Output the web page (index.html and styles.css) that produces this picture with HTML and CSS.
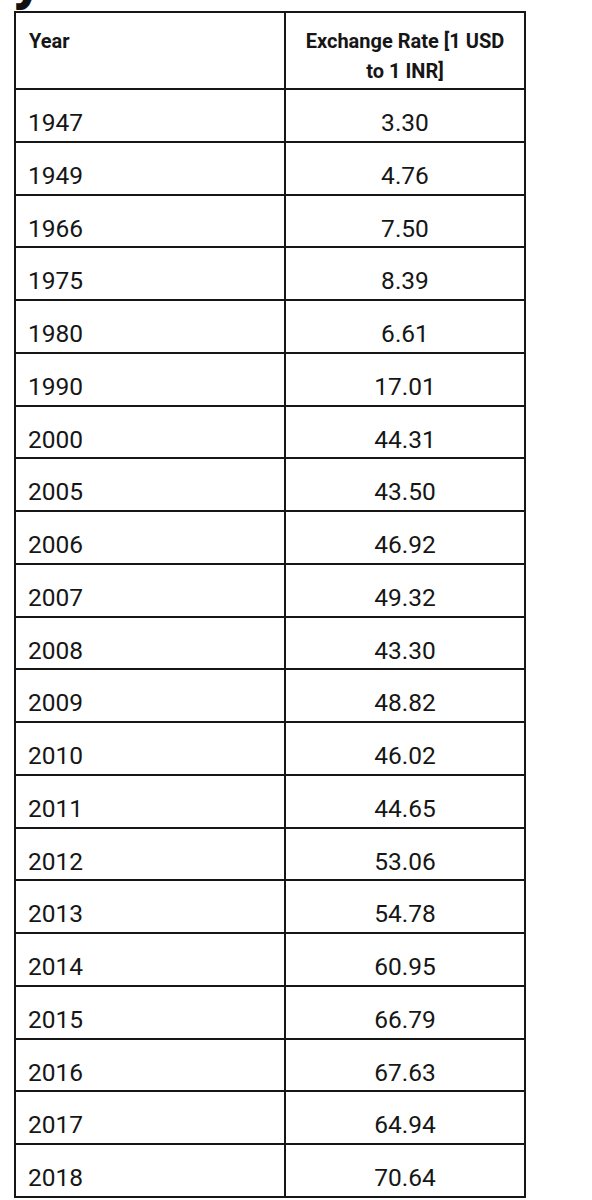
FILE: index.html
```html
<!DOCTYPE html>
<html>
<head>
<meta charset="utf-8">
<link rel="stylesheet" href="styles.css">
</head>
<body>
<div class="page">
  <div class="title-clip"><span class="title">y</span></div>
  <div class="table">
    <div class="cell head">Year</div>
    <div class="cell head center">Exchange Rate [1 USD<br>to 1 INR]</div>
    <div class="cell">1947</div><div class="cell center">3.30</div>
    <div class="cell">1949</div><div class="cell center">4.76</div>
    <div class="cell">1966</div><div class="cell center">7.50</div>
    <div class="cell">1975</div><div class="cell center">8.39</div>
    <div class="cell">1980</div><div class="cell center">6.61</div>
    <div class="cell">1990</div><div class="cell center">17.01</div>
    <div class="cell">2000</div><div class="cell center">44.31</div>
    <div class="cell">2005</div><div class="cell center">43.50</div>
    <div class="cell">2006</div><div class="cell center">46.92</div>
    <div class="cell">2007</div><div class="cell center">49.32</div>
    <div class="cell">2008</div><div class="cell center">43.30</div>
    <div class="cell">2009</div><div class="cell center">48.82</div>
    <div class="cell">2010</div><div class="cell center">46.02</div>
    <div class="cell">2011</div><div class="cell center">44.65</div>
    <div class="cell">2012</div><div class="cell center">53.06</div>
    <div class="cell">2013</div><div class="cell center">54.78</div>
    <div class="cell">2014</div><div class="cell center">60.95</div>
    <div class="cell">2015</div><div class="cell center">66.79</div>
    <div class="cell">2016</div><div class="cell center">67.63</div>
    <div class="cell">2017</div><div class="cell center">64.94</div>
    <div class="cell">2018</div><div class="cell center">70.64</div>
  </div>
</div>
</body>
</html>
```

FILE: styles.css
```css
html, body {
  margin: 0;
  padding: 0;
  background: #ffffff;
}

.page {
  padding: 0 0 0 14px;
  width: 512px;
  height: 1200px;
  overflow: hidden;
}

.title-clip {
  height: 11px;
  overflow: hidden;
  position: relative;
}

.title {
  position: absolute;
  left: 0px;
  top: -40px;
  font-family: "Open Sans", sans-serif;
  font-weight: 800;
  font-size: 44px;
  line-height: 44px;
  color: #111;
}

.table {
  display: grid;
  grid-template-columns: 270px 240px;
  grid-template-rows: 77px repeat(21, 52.76px);
  border-left: 2px solid #161616;
  border-top: 2px solid #161616;
  width: 510px;
}

.cell {
  box-sizing: border-box;
  border-right: 2px solid #161616;
  border-bottom: 2px solid #161616;
  font-family: Roboto, "Liberation Sans", sans-serif;
  font-size: 24.5px;
  line-height: 28px;
  color: #161616;
  padding: 19px 0 0 12px;
}

.cell.center {
  text-align: center;
  padding-left: 0;
}

.head {
  font-weight: 700;
  font-size: 20px;
  line-height: 30px;
  padding-top: 13px;
  padding-left: 13px;
}
```
